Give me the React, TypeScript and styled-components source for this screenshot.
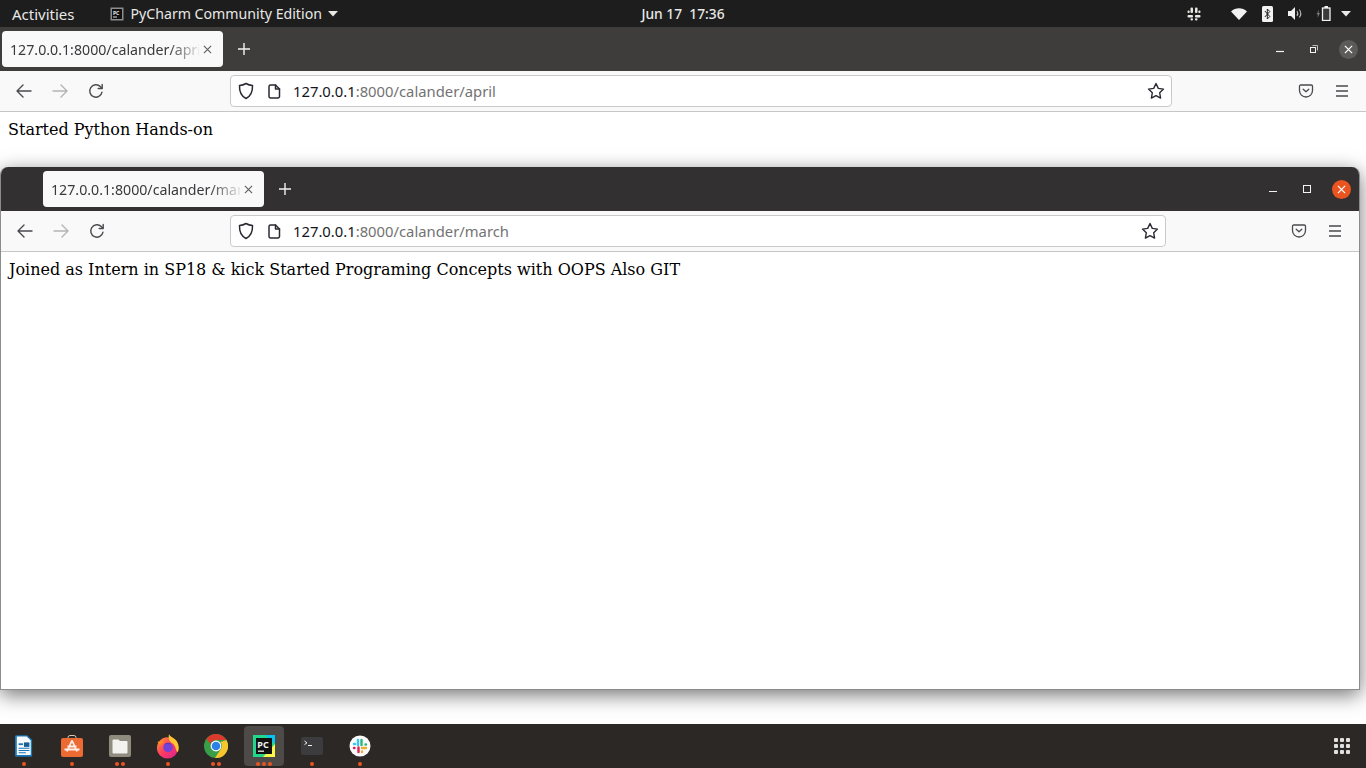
import React from "react";
import styled, { createGlobalStyle } from "styled-components";

const GlobalStyle = createGlobalStyle`
  html, body { margin: 0; padding: 0; width: 1366px; height: 768px; overflow: hidden; background: #fff; }
  * { box-sizing: border-box; }
`;

const uiFont = `"Noto Sans", "Open Sans", sans-serif`;

const Desktop = styled.div`
  position: relative;
  width: 1366px;
  height: 768px;
  display: flex;
  flex-direction: column;
  font-family: ${uiFont};
  overflow: hidden;
`;

const TopBar = styled.div`
  height: 27px;
  flex: none;
  display: grid;
  grid-template-columns: 1fr auto 1fr;
  align-items: center;
  background: #1d1d1d;
  color: #e8e8e6;
`;

const TopLeft = styled.div`
  display: flex;
  align-items: center;
  padding-left: 12px;
  font-size: 15px;
`;

const AppMenu = styled.div`
  display: flex;
  align-items: center;
  margin-left: 35px;
  gap: 6px;
  font-size: 14.15px;

  span {
    margin-left: 1px;
  }
`;

const Clock = styled.div`
  font-weight: 500;
  font-size: 13.8px;
  white-space: pre;
`;

const Tray = styled.div`
  display: flex;
  align-items: center;
  justify-content: flex-end;
  padding-right: 8px;
`;

const TraySlot = styled.div<{ $w: number }>`
  width: ${(p) => p.$w}px;
  display: flex;
  justify-content: center;
  align-items: center;
`;

const Main = styled.div`
  flex: 1;
  min-height: 0;
  display: flex;
  flex-direction: column;
  background: #fff;
`;

const Win = styled.div<{ $front?: boolean }>`
  display: flex;
  flex-direction: column;
  background: #fff;
  ${(p) =>
    p.$front
      ? `
    position: absolute;
    left: 0;
    top: 167px;
    width: 1360px;
    height: 523px;
    border-radius: 8px 8px 0 0;
    border: 1px solid #8c8c8c;
    border-top: 0;
    box-shadow: 0 5px 20px rgba(0,0,0,0.55);
    overflow: hidden;
  `
      : `flex: 1;`}
`;

const TabStrip = styled.div<{ $front?: boolean }>`
  height: 44px;
  flex: none;
  display: flex;
  align-items: center;
  background: ${(p) => (p.$front ? "#323031" : "#3e3d3b")};
  padding-left: ${(p) => (p.$front ? "42px" : "2px")};
`;

const Tab = styled.div`
  width: 221px;
  height: 36px;
  background: #f9f9fa;
  border-radius: 4px;
  display: flex;
  align-items: center;
  padding-left: 8px;
  color: #3a3a3c;
  font-size: 14.2px;
`;

const TabTitle = styled.div`
  width: 189px;
  white-space: nowrap;
  overflow: hidden;
  -webkit-mask-image: linear-gradient(to right, #000 84%, rgba(0, 0, 0, 0.1) 100%);
  mask-image: linear-gradient(to right, #000 84%, rgba(0, 0, 0, 0.1) 100%);
`;

const TabClose = styled.div`
  margin-left: 4px;
  display: flex;
`;

const NewTab = styled.div`
  margin-left: 15px;
  display: flex;
`;

const WinControls = styled.div`
  margin-left: auto;
  display: flex;
  align-items: center;
  padding-right: 1px;
`;

const WinBtn = styled.div<{ $variant?: "idle" | "hot" }>`
  width: 34px;
  height: 19px;
  display: flex;
  align-items: center;
  justify-content: center;
  position: relative;
  ${(p) =>
    p.$variant
      ? `
    &::before {
      content: "";
      position: absolute;
      left: 7.5px;
      top: 0;
      width: 19px;
      height: 19px;
      border-radius: 50%;
      background: ${p.$variant === "hot" ? "#e95420" : "#5c5b59"};
    }
    svg { position: relative; }
  `
      : ""}
`;

const Toolbar = styled.div`
  height: 41px;
  flex: none;
  display: flex;
  align-items: center;
  background: #f9f9fa;
  border-bottom: 1px solid #c6c6c6;
`;

const NavGroup = styled.div<{ $front?: boolean }>`
  width: ${(p) => (p.$front ? "229px" : "230px")};
  flex: none;
  display: flex;
  align-items: center;
  padding-left: 15px;
  gap: 18px;
`;

const UrlBar = styled.div`
  flex: 1;
  height: 32px;
  background: #fff;
  border: 1px solid #c9c9cb;
  border-radius: 4px;
  display: flex;
  align-items: center;
  padding-left: 7px;
  padding-right: 6px;
  font-size: 14.8px;
`;

const UrlIcons = styled.div`
  display: flex;
  align-items: center;
  gap: 14px;
  width: 55px;
  flex: none;
`;

const Host = styled.span`
  color: #15141a;
`;

const UrlRest = styled.span`
  color: #737373;
`;

const Star = styled.div`
  margin-left: auto;
  display: flex;
`;

const RightGroup = styled.div<{ $front?: boolean }>`
  width: ${(p) => (p.$front ? "193px" : "194px")};
  flex: none;
  display: flex;
  justify-content: flex-end;
  align-items: center;
  padding-right: 17px;
  gap: 21px;
`;

const Page = styled.div`
  flex: 1;
  padding: 8px;
  background: #fff;
  color: #000;
  font-family: "DejaVu Serif", serif;
  font-size: 16px;
`;

const Dock = styled.div`
  height: 44px;
  flex: none;
  background: #2c2825;
  display: flex;
  align-items: center;
  padding-left: 4px;
  position: relative;
`;

const DockItem = styled.div<{ $active?: boolean }>`
  width: 40px;
  height: 40px;
  margin-right: 8px;
  display: flex;
  align-items: center;
  justify-content: center;
  position: relative;
  border-radius: 4px;
  background: ${(p) => (p.$active ? "#4d4a48" : "transparent")};
`;

const Dots = styled.div`
  position: absolute;
  left: 0;
  right: 0;
  bottom: 0;
  display: flex;
  justify-content: center;
  gap: 2px;
`;

const Dot = styled.span`
  width: 4px;
  height: 4px;
  border-radius: 50%;
  background: #e95420;
`;

const AppGrid = styled.div`
  margin-left: auto;
  margin-right: 16px;
  display: grid;
  grid-template-columns: repeat(3, 4px);
  gap: 2px;
`;

const GridDot = styled.span`
  width: 4px;
  height: 4px;
  border-radius: 1px;
  background: #e0e0e0;
`;

const stroke = { fill: "none", strokeLinecap: "round" as const, strokeLinejoin: "round" as const };

const IconBack = ({ color = "#4a4a4f" }: { color?: string }) => (
  <svg width="18" height="16" viewBox="0 0 18 16" {...stroke} stroke={color} strokeWidth="1.4">
    <path d="M2 8h14M8 2L2 8l6 6" />
  </svg>
);

const IconForward = () => (
  <svg width="18" height="16" viewBox="0 0 18 16" {...stroke} stroke="#b4b4b6" strokeWidth="1.4">
    <path d="M2 8h14M10 2l6 6-6 6" />
  </svg>
);

const IconReload = () => (
  <svg width="18" height="16" viewBox="0 0 18 16" {...stroke} stroke="#4a4a4f" strokeWidth="1.4">
    <path d="M15 9.200A6.200 6.200 0 1 1 13.300 3.600l1.500 1.600" />
    <path d="M15.200 1.500v4h-4" />
  </svg>
);

const IconShield = () => (
  <svg width="16" height="18" viewBox="0 0 16 18" {...stroke} stroke="#2b2a33" strokeWidth="1.5">
    <path d="M8 1.500c2 1.200 4 1.800 6.500 2 .2 5.500-1.500 10.500-6.500 13C3 14 1.300 9 1.500 3.500c2.500-.2 4.500-.8 6.500-2z" />
  </svg>
);

const IconDoc = () => (
  <svg width="13" height="15" viewBox="0 0 13 15" {...stroke} stroke="#2b2a33" strokeWidth="1.5">
    <path d="M2.500 1h5l4 4v7.500a1.500 1.500 0 0 1-1.500 1.500H2.500A1.500 1.500 0 0 1 1 12.500v-10A1.500 1.500 0 0 1 2.500 1z" />
    <path d="M7.500 1v4h4" />
  </svg>
);

const IconStar = () => (
  <svg width="18" height="18" viewBox="0 0 18 18" {...stroke} stroke="#2b2a33" strokeWidth="1.4">
    <path d="M9 1.500l2.300 4.900 5.200.7-3.800 3.700.9 5.300L9 13.600l-4.600 2.500.9-5.300L1.500 7.100l5.200-.7z" />
  </svg>
);

const IconPocket = () => (
  <svg width="16" height="14" viewBox="0 0 16 14" {...stroke} stroke="#4a4a4f" strokeWidth="1.3">
    <path d="M2.700 1h10.600c.7 0 1.200.5 1.200 1.200V6.500a6.500 6.500 0 0 1-13 0V2.200C1.500 1.500 2 1 2.700 1z" />
    <path d="M5.200 5.200L8 7.800l2.800-2.600" />
  </svg>
);

const IconMenu = () => (
  <svg width="14" height="12" viewBox="0 0 14 12" stroke="#4a4a4f" strokeWidth="1.4">
    <path d="M1 1h12M1 6h12M1 11h12" />
  </svg>
);

const IconClose = ({ size = 9, color = "#5b5b5f", w = 1.2 }: { size?: number; color?: string; w?: number }) => (
  <svg width={size} height={size} viewBox="0 0 10 10" stroke={color} strokeWidth={w}>
    <path d="M1 1l8 8M9 1l-8 8" />
  </svg>
);

const IconPlus = () => (
  <svg width="12" height="12" viewBox="0 0 12 12" stroke="#f2f2f2" strokeWidth="1.4">
    <path d="M6 0v12M0 6h12" />
  </svg>
);

const IconMin = () => (
  <svg width="8" height="9" viewBox="0 0 8 9" stroke="#f4f4f4" strokeWidth="1.2">
    <path d="M0 6.500h8" />
  </svg>
);

const IconMax = () => (
  <svg width="8" height="8" viewBox="0 0 8 8" fill="none" stroke="#f4f4f4" strokeWidth="1">
    <rect x="0.500" y="0.500" width="7" height="7" />
  </svg>
);

const IconRestore = () => (
  <svg width="8" height="8" viewBox="0 0 8 8" fill="none" stroke="#f4f4f4" strokeWidth="1">
    <rect x="0.500" y="2.500" width="5" height="5" />
    <path d="M2.500 0.500h5v5" stroke="#bdbdbd" />
  </svg>
);

const TriangleDown = () => (
  <svg width="10" height="6" viewBox="0 0 10 6" fill="#e8e8e6">
    <path d="M0 0h10L5 5.500z" />
  </svg>
);

const PyCharmMini = () => (
  <svg width="14" height="14" viewBox="0 0 14 14">
    <rect x="0.500" y="0.500" width="13" height="13" fill="#8d8d8d" />
    <rect x="2" y="2" width="10" height="10" fill="#111" />
    <text x="3" y="7.500" fontSize="5" fontWeight="700" fill="#e8e8e8" fontFamily="Noto Sans">PC</text>
    <rect x="3" y="9.500" width="4" height="1" fill="#ddd" />
  </svg>
);

const SlackTray = () => (
  <svg width="14" height="14" viewBox="0 0 14 14" fill="#e8e8e6">
    <rect x="3.500" y="0.500" width="2.500" height="5.500" rx="1" />
    <rect x="0.500" y="3.500" width="2.200" height="2.500" rx="1" />
    <rect x="8" y="0.500" width="2.500" height="5.500" rx="1" />
    <rect x="11.300" y="3.500" width="2.200" height="2.500" rx="1" />
    <rect x="0.500" y="8" width="5.500" height="2.500" rx="1" />
    <rect x="3.500" y="11.300" width="2.500" height="2.200" rx="1" />
    <rect x="8" y="8" width="5.500" height="2.500" rx="1" />
    <rect x="8" y="11.300" width="2.500" height="2.200" rx="1" />
  </svg>
);

const Wifi = () => (
  <svg width="16" height="12" viewBox="0 0 16 12" fill="#f2f2f2">
    <path d="M0 3.500C4.500-.7 11.500-.7 16 3.500L8 12z" />
  </svg>
);

const Bluetooth = () => (
  <svg width="11" height="16" viewBox="0 0 11 16">
    <rect width="11" height="16" rx="1.500" fill="#f2f2f2" />
    <path d="M2.800 5l5 5.500-2.500 2.500V3l2.500 2.500-5 5.500" fill="none" stroke="#1d1d1d" strokeWidth="1" />
  </svg>
);

const Volume = () => (
  <svg width="15" height="13" viewBox="0 0 15 13">
    <path d="M0 4h3l4-4v13L3 9H0z" fill="#f2f2f2" />
    <path d="M9 4c1 1.500 1 3.500 0 5M11.300 2.500c1.800 2.400 1.800 5.600 0 8" fill="none" stroke="#bdbdbd" strokeWidth="1.100" />
  </svg>
);

const Battery = () => (
  <svg width="15" height="15" viewBox="0 0 15 15">
    <path d="M3 3.500L0.500 8.500h1.500L1.500 12 4 7H2.500z" fill="#7a7a7a" />
    <rect x="6.500" y="2" width="7.500" height="12.500" fill="#3a3a3a" stroke="#f2f2f2" strokeWidth="1.300" />
    <rect x="8.500" y="0" width="3.500" height="2" fill="#f2f2f2" />
  </svg>
);

const DocIcon = () => (
  <svg width="18" height="22" viewBox="0 0 20 24">
    <path d="M1.500 0h12L19 5v17.500a1.500 1.500 0 0 1-1.500 1.500h-16A1.500 1.500 0 0 1 0 22.500v-21A1.500 1.500 0 0 1 1.500 0z" fill="#1a77b8" />
    <path d="M2 1.500h11L17.500 6v16H2z" fill="#f7fafc" />
    <rect x="4" y="9" width="5" height="2" fill="#1a77b8" />
    <rect x="10" y="8" width="6" height="5" fill="#1a5f93" />
    <path d="M4 14.500h12M4 17h12M4 19.500h8" stroke="#1a77b8" strokeWidth="1.200" />
  </svg>
);

const StoreIcon = () => (
  <svg width="24" height="24" viewBox="0 0 24 24">
    <path d="M8 5V3.500a2 2 0 0 1 2-2h4a2 2 0 0 1 2 2V5" fill="none" stroke="#d8c8b0" strokeWidth="1" />
    <rect x="1" y="4" width="22" height="19" rx="2" fill="#ee6a33" />
    <path d="M12 6.500L7 17.500M12 6.500l5 11M4.500 15.500h15M7.500 12.500h9" fill="none" stroke="#fbeee8" strokeWidth="1.800" />
  </svg>
);

const FilesIcon = () => (
  <svg width="22" height="22" viewBox="0 0 22 22">
    <rect width="22" height="22" rx="2" fill="#8f8b7e" />
    <path d="M3.500 5.500a1 1 0 0 1 1-1h5l1.500 1.500h6.500a1 1 0 0 1 1 1v10.500a1 1 0 0 1-1 1h-13a1 1 0 0 1-1-1z" fill="#f4f2ee" />
  </svg>
);

const FirefoxIcon = () => (
  <svg width="24" height="25" viewBox="0 0 24 26">
    <defs>
      <linearGradient id="ffBody" x1="0" y1="0" x2="1" y2="1">
        <stop offset="0" stopColor="#ff9a2e" />
        <stop offset="0.5" stopColor="#ff3b5f" />
        <stop offset="1" stopColor="#d81f9a" />
      </linearGradient>
    </defs>
    <circle cx="11.500" cy="14.500" r="11" fill="url(#ffBody)" />
    <path d="M13 0c1 3 6 4 8.500 8 2 4 2.500 8 .5 11-2-1-2-7-5-9-3-2-5-4-4-10z" fill="#ffc533" />
    <path d="M1 8c2 0 4-1 7 0-2 1-3 2-3 3-2 0-3-1-4-3z" fill="#ff8a1f" />
    <circle cx="12" cy="14" r="5" fill="#7542d8" />
    <path d="M8 11c1.500-2 6-2 8 0-3-1-5-1-8 0z" fill="#4a2bb0" />
  </svg>
);

const ChromeIcon = () => (
  <svg width="24" height="24" viewBox="0 0 24 24">
    <circle cx="12" cy="12" r="12" fill="#3a9e48" />
    <path d="M12 0a12 12 0 0 1 10.400 6H12a6 6 0 0 0-5.600 3.700L2.500 5A12 12 0 0 1 12 0z" fill="#dd3a2e" />
    <path d="M22.400 6A12 12 0 0 1 11 24l5.500-8.500A6 6 0 0 0 16.500 8z" fill="#f7c52c" />
    <circle cx="12" cy="12" r="5.400" fill="#fff" />
    <circle cx="12" cy="12" r="4.300" fill="#2f7fe8" />
  </svg>
);

const PyCharmIcon = () => (
  <svg width="22" height="22" viewBox="0 0 22 22">
    <rect width="22" height="22" fill="#21d789" />
    <path d="M0 0h22v9L12 0z" fill="#07c3f2" />
    <path d="M22 9v13H10z" fill="#fcf84a" />
    <rect x="3" y="3" width="16" height="16" fill="#111" />
    <text x="4.300" y="12.500" fontSize="9" fontWeight="700" fill="#f2f2f2" fontFamily="Noto Sans">PC</text>
    <rect x="5" y="15.500" width="6" height="1.400" fill="#ddd" />
  </svg>
);

const TerminalIcon = () => (
  <svg width="22" height="18" viewBox="0 0 22 18">
    <rect width="22" height="18" rx="2" fill="#3c3c3e" />
    <path d="M3.500 4l2.500 1.800-2.500 1.800" fill="none" stroke="#eee" strokeWidth="1" />
    <path d="M7 8.500h4" stroke="#eee" strokeWidth="1" />
  </svg>
);

const SlackIcon = () => (
  <svg width="22" height="22" viewBox="0 0 22 22">
    <circle cx="11" cy="11" r="10.500" fill="#fbfbfb" />
    <g strokeWidth="2.400" strokeLinecap="round" fill="none">
      <path d="M9 5v5M5 9h1" stroke="#36c5f0" />
      <path d="M12.500 5v5M17 9.500h-.5" stroke="#2eb67d" />
      <path d="M13 13h4M13 17v-.5" stroke="#ecb22e" />
      <path d="M9.500 12.500v4.500M5 13h.5" stroke="#e01e5a" />
    </g>
  </svg>
);

type BrowserProps = { front?: boolean; path: string; children: React.ReactNode };

function Browser({ front, path, children }: BrowserProps) {
  return (
    <Win $front={front}>
      <TabStrip $front={front}>
        <Tab>
          <TabTitle>127.0.0.1:8000/calander/{path}</TabTitle>
          <TabClose><IconClose /></TabClose>
        </Tab>
        <NewTab><IconPlus /></NewTab>
        <WinControls>
          <WinBtn><IconMin /></WinBtn>
          <WinBtn>{front ? <IconMax /> : <IconRestore />}</WinBtn>
          <WinBtn $variant={front ? "hot" : "idle"}><IconClose size={9} color="#fff" w={1.400} /></WinBtn>
        </WinControls>
      </TabStrip>
      <Toolbar>
        <NavGroup $front={front}>
          <IconBack />
          <IconForward />
          <IconReload />
        </NavGroup>
        <UrlBar>
          <UrlIcons>
            <IconShield />
            <IconDoc />
          </UrlIcons>
          <Host>127.0.0.1</Host>
          <UrlRest>:8000/calander/{path}</UrlRest>
          <Star><IconStar /></Star>
        </UrlBar>
        <RightGroup $front={front}>
          <IconPocket />
          <IconMenu />
        </RightGroup>
      </Toolbar>
      <Page>{children}</Page>
    </Win>
  );
}

const dockApps: { icon: React.ReactNode; dots: number; active?: boolean }[] = [
  { icon: <DocIcon />, dots: 1 },
  { icon: <StoreIcon />, dots: 1 },
  { icon: <FilesIcon />, dots: 2 },
  { icon: <FirefoxIcon />, dots: 1 },
  { icon: <ChromeIcon />, dots: 2 },
  { icon: <PyCharmIcon />, dots: 3, active: true },
  { icon: <TerminalIcon />, dots: 1 },
  { icon: <SlackIcon />, dots: 1 },
];

export default function App() {
  return (
    <Desktop>
      <GlobalStyle />
      <TopBar>
        <TopLeft>
          <span>Activities</span>
          <AppMenu>
            <PyCharmMini />
            <span>PyCharm Community Edition</span>
            <TriangleDown />
          </AppMenu>
        </TopLeft>
        <Clock>Jun 17  17:36</Clock>
        <Tray>
          <TraySlot $w={56}><SlackTray /></TraySlot>
          <TraySlot $w={34}><Wifi /></TraySlot>
          <TraySlot $w={22}><Bluetooth /></TraySlot>
          <TraySlot $w={34}><Volume /></TraySlot>
          <TraySlot $w={22}><Battery /></TraySlot>
          <TraySlot $w={24}><TriangleDown /></TraySlot>
        </Tray>
      </TopBar>
      <Main>
        <Browser path="april">Started Python Hands-on</Browser>
      </Main>
      <Browser front path="march">
        Joined as Intern in SP18 &amp; kick Started Programing Concepts with OOPS Also GIT
      </Browser>
      <Dock>
        {dockApps.map((app, i) => (
          <DockItem key={i} $active={app.active}>
            {app.icon}
            <Dots>
              {Array.from({ length: app.dots }).map((_, d) => (
                <Dot key={d} />
              ))}
            </Dots>
          </DockItem>
        ))}
        <AppGrid>
          {Array.from({ length: 9 }).map((_, i) => (
            <GridDot key={i} />
          ))}
        </AppGrid>
      </Dock>
    </Desktop>
  );
}
